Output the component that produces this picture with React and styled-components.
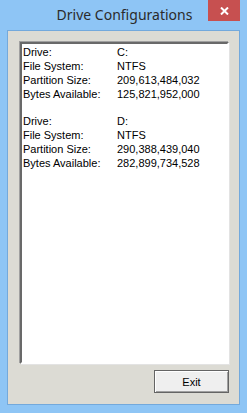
import styled, { createGlobalStyle } from "styled-components"

const Global = createGlobalStyle`
    html, body {
        margin: 0;
        padding: 0;
        background: #8ec5f5;
    }
`

const drives = [
    { drive: "C:", fs: "NTFS", size: "209,613,484,032", free: "125,821,952,000" },
    { drive: "D:", fs: "NTFS", size: "290,388,439,040", free: "282,899,734,528" },
]

function App() {

    return (
        <Window>
            <Global />
            <TitleBar>
                <Title>Drive Configurations</Title>
                <CloseButton>
                    <svg width="9" height="8" viewBox="0 0 9 8">
                        <path d="M1 0.5 L8 7.5 M8 0.5 L1 7.5" stroke="#fff" strokeWidth="2" />
                    </svg>
                </CloseButton>
            </TitleBar>
            <Client>
                <ListBox>
                    {drives.map((d, i) => (
                        <Block key={d.drive} $gap={i > 0}>
                            <Label>Drive:</Label><Value>{d.drive}</Value>
                            <Label>File System:</Label><Value>{d.fs}</Value>
                            <Label>Partition Size:</Label><Value>{d.size}</Value>
                            <Label>Bytes Available:</Label><Value>{d.free}</Value>
                        </Block>
                    ))}
                </ListBox>
                <Footer>
                    <Button>Exit</Button>
                </Footer>
            </Client>
        </Window>
    )
} export default App


const Window = styled.div`
    width: 247px;
    height: 413px;
    box-sizing: border-box;
    background-color: #8ec5f5;
    display: flex;
    flex-direction: column;
    padding: 0 7px 8px 7px;
`

const TitleBar = styled.div`
    height: 30px;
    display: flex;
    align-items: flex-start;
    justify-content: center;
    position: relative;
`

const Title = styled.div`
    font-family: "Segoe UI", "Noto Sans", "Open Sans", sans-serif;
    font-size: 14px;
    color: #2b2b2b;
    margin-top: 5px;
    padding-left: 2px;
`

const CloseButton = styled.div`
    position: absolute;
    right: 0;
    top: 0;
    width: 32px;
    height: 21px;
    background-color: #c75050;
    display: flex;
    align-items: center;
    justify-content: center;
`

const Client = styled.div`
    flex: 1;
    border: 1px solid #73a9dc;
    background-color: #dcdbd4;
    display: flex;
    flex-direction: column;
    padding: 11px 10px 11px 12px;
`

const ListBox = styled.div`
    flex: 1;
    background-color: #fff;
    border-style: solid;
    border-width: 2px;
    border-color: #696969 #ffffff #ffffff #696969;
    box-shadow: -1px -1px 0 #a0a0a0, 1px 1px 0 #e3e3e3;
    padding: 1px 0 0 1px;
    overflow: hidden;
`

const Block = styled.div`
    display: grid;
    grid-template-columns: 94px auto;
    margin-top: ${p => p.$gap ? "13px" : "0"};
    font-family: "Liberation Sans", Arial, sans-serif;
    font-size: 11px;
    line-height: 14px;
    color: #000;
`

const Label = styled.div``

const Value = styled.div``

const Footer = styled.div`
    display: flex;
    justify-content: flex-end;
    margin-top: 6px;
`

const Button = styled.div`
    width: 75px;
    height: 23px;
    box-sizing: border-box;
    border: 1px solid #646464;
    box-shadow: inset 1px 1px 0 #fff, inset -1px -1px 0 #a0a0a0;
    background-color: #efefef;
    display: flex;
    align-items: center;
    justify-content: center;
    font-family: "Liberation Sans", Arial, sans-serif;
    font-size: 11px;
    color: #000;
`
